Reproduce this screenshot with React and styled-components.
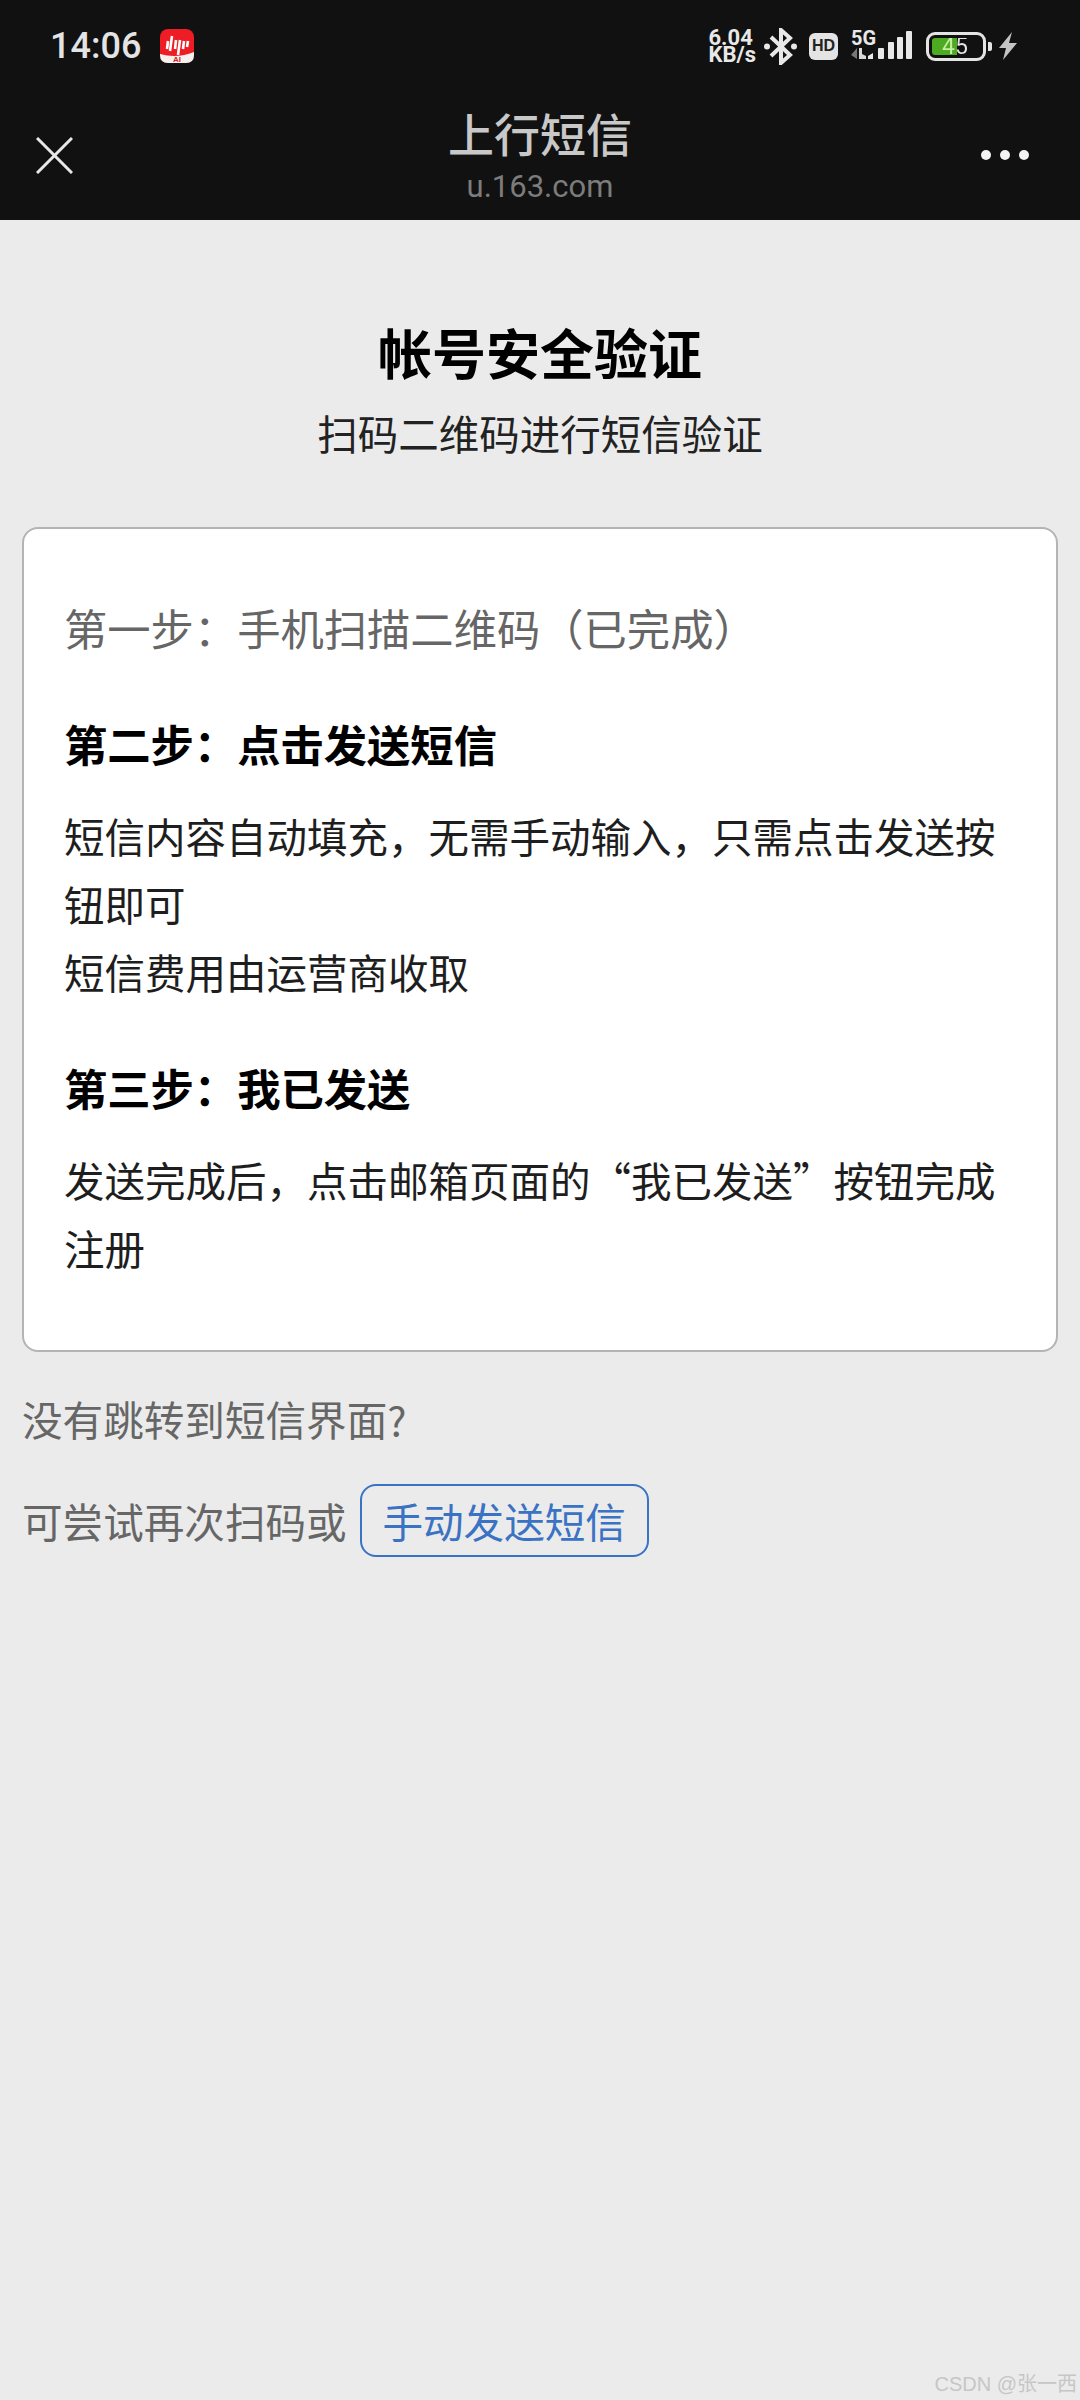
import React from "react";
import styled, { createGlobalStyle } from "styled-components";

const CJK = `"Noto Sans CJK SC", "Noto Sans", sans-serif`;

const GlobalStyle = createGlobalStyle`
  html, body {
    margin: 0;
    padding: 0;
    background: #ebebeb;
  }
  * {
    box-sizing: border-box;
  }
`;

const Page = styled.div`
  width: 1080px;
  height: 2400px;
  position: relative;
  overflow: hidden;
  background: #ebebeb;
  font-family: ${CJK};
`;

const Header = styled.header`
  height: 220px;
  background: #111111;
  color: #e8e8e8;
`;

const StatusBar = styled.div`
  height: 92px;
  padding: 27px 63px 0 50px;
  display: flex;
  align-items: flex-start;
  justify-content: space-between;
`;

const StatusLeft = styled.div`
  display: flex;
  align-items: center;
  gap: 19px;
`;

const Clock = styled.span`
  font-family: Roboto, sans-serif;
  font-weight: 500;
  font-size: 36px;
  line-height: 38px;
  color: #e4e4e4;
`;

const StatusRight = styled.div`
  display: flex;
  align-items: center;
  height: 38px;
`;

const Speed = styled.span`
  font-family: Roboto, sans-serif;
  font-weight: 700;
  font-size: 22px;
  line-height: 17px;
  white-space: nowrap;
  color: #e8e8e8;
  margin-right: 8px;
`;

const HdBadge = styled.span`
  width: 29px;
  height: 27px;
  margin: 0 13px 0 12px;
  border-radius: 6px;
  background: #e4e4e4;
  color: #222;
  font-family: "Liberation Sans", sans-serif;
  font-weight: 700;
  font-size: 16px;
  display: flex;
  align-items: center;
  justify-content: center;
`;

const Battery = styled.span`
  width: 60px;
  height: 29px;
  margin-left: 13px;
  border: 3px solid #e4e4e4;
  border-radius: 9px;
  padding: 3px;
  display: flex;
`;

const BatteryInner = styled.span`
  flex: 1;
  border-radius: 3px;
  background: linear-gradient(90deg, #4dab22 0 25px, transparent 25px);
  padding-left: 10px;
  display: flex;
  align-items: center;
`;

const BatteryLevel = styled.span`
  font-family: Roboto, sans-serif;
  font-size: 23px;
  line-height: 17px;
  color: transparent;
  background: linear-gradient(90deg, #c4f0a4 15px, #e4e4e4 15px);
  -webkit-background-clip: text;
  background-clip: text;
`;

const BatteryNub = styled.span`
  width: 4px;
  height: 9px;
  margin: 0 7px 0 2px;
  border-radius: 0 2px 2px 0;
  background: #e4e4e4;
`;

const NavBar = styled.div`
  height: 128px;
  padding: 0 36px;
  display: grid;
  grid-template-columns: 1fr auto 1fr;
  align-items: start;
`;

const CloseButton = styled.span`
  display: block;
  width: 37px;
  height: 37px;
  margin-top: 45px;
`;

const NavTitles = styled.div`
  text-align: center;
  margin-top: 14px;
`;

const NavTitle = styled.div`
  font-size: 46px;
  line-height: 52px;
  font-weight: 500;
  color: #c8c8c8;
`;

const NavUrl = styled.div`
  font-family: Roboto, sans-serif;
  font-size: 31px;
  line-height: 40px;
  margin-top: 9px;
  color: #7c7c7c;
`;

const MoreButton = styled.span`
  justify-self: end;
  display: flex;
  gap: 9px;
  margin: 58px 15px 0 0;
`;

const Dot = styled.i`
  width: 10px;
  height: 10px;
  border-radius: 50%;
  background: #f4f4f4;
`;

const Content = styled.main`
  padding: 0 22px;
`;

const Intro = styled.div`
  text-align: center;
  padding-top: 97px;
  height: 307px;
`;

const Heading = styled.h1`
  margin: 0;
  font-size: 54px;
  line-height: 70px;
  font-weight: 700;
  color: #000;
`;

const Subheading = styled.p`
  margin: 21px 0 0;
  font-size: 40.5px;
  line-height: 50px;
  color: #222;
`;

const Card = styled.section`
  height: 825px;
  padding: 63px 40px 0;
  background: #fff;
  border: 2px solid #b4b4b4;
  border-radius: 16px;
`;

const Step = styled.div`
  margin: 0 0 ${(p) => p.$gap || 0}px;
  font-size: 43.3px;
  line-height: 70px;
  color: ${(p) => (p.$done ? "#666" : "#000")};
  font-weight: ${(p) => (p.$done ? 400 : 700)};
`;

const Text = styled.p`
  margin: 0 0 ${(p) => p.$gap || 0}px;
  font-size: 40.5px;
  line-height: 67.8px;
  color: #1e1e1e;
`;

const Hint = styled.div`
  display: flex;
  align-items: center;
  font-size: 40.6px;
  line-height: 50px;
  color: #666;
  margin-top: ${(p) => p.$top}px;
`;

const LinkButton = styled.span`
  margin-left: 13px;
  width: 289px;
  height: 73px;
  border: 2px solid #3a72c4;
  border-radius: 16px;
  color: #3a72c4;
  display: flex;
  align-items: center;
  justify-content: center;
`;

const Watermark = styled.span`
  position: absolute;
  right: 3px;
  bottom: 3px;
  font-family: "Liberation Sans", ${CJK};
  font-size: 20px;
  line-height: 26px;
  color: #c6c6c6;
`;

const AppLogo = () => (
  <svg width="34" height="34" viewBox="0 0 34 34">
    <rect width="34" height="34" rx="8" fill="#ee1c25" />
    <path d="M0 25 Q17 30 34 23 V26 Q34 34 26 34 H8 Q0 34 0 26 Z" fill="#f6f0ee" />
    <path
      d="M8 12 L7 20 M12 7 L10 22 M16 11 L15 20 M20 11 L18 26 M24 12 L23 20 M28 12 L27 18"
      stroke="#fff"
      strokeWidth="2.6"
    />
    <text x="17" y="33" textAnchor="middle" fontSize="8" fontWeight="700" fill="#d8202a" fontFamily="Liberation Sans">
      AI
    </text>
  </svg>
);

const BluetoothIcon = () => (
  <svg width="33" height="37" viewBox="0 0 33 37">
    <path d="M7 9 L26 27 L17 35 V2 L26 10 L7 28" fill="none" stroke="#e8e8e8" strokeWidth="4" />
    <circle cx="3" cy="18.5" r="3" fill="#e8e8e8" />
    <circle cx="30" cy="18.5" r="3" fill="#e8e8e8" />
  </svg>
);

const SignalIcon = () => (
  <svg width="62" height="32" viewBox="0 0 62 32">
    <text x="0" y="15" fontSize="20" fontWeight="700" fill="#e8e8e8" fontFamily="Roboto">
      5G
    </text>
    <path d="M6 18 V29 L0 25 Z" fill="#777" />
    <path d="M8 18 H11 V24 L15 26 V29 H8 Z" fill="#d8d8d8" />
    <path d="M17 26 L22 23 V29 H17 Z" fill="#e8e8e8" />
    <rect x="27" y="18" width="6" height="11" rx="1" fill="#e8e8e8" />
    <rect x="37" y="12" width="6" height="17" rx="1" fill="#e8e8e8" />
    <rect x="46" y="7" width="6" height="22" rx="1" fill="#e8e8e8" />
    <rect x="55" y="1" width="6" height="28" rx="1" fill="#e8e8e8" />
  </svg>
);

const BoltIcon = () => (
  <svg width="18" height="28" viewBox="0 0 18 28">
    <path d="M13 0 L0 16 H7 L4 28 L18 11 H10 Z" fill="#c4c4c4" />
  </svg>
);

const CloseIcon = () => (
  <svg width="37" height="37" viewBox="0 0 37 37">
    <path d="M1 1 L36 36 M36 1 L1 36" stroke="#e8e8e8" strokeWidth="3" />
  </svg>
);

export default function App() {
  return (
    <Page>
      <GlobalStyle />
      <Header>
        <StatusBar>
          <StatusLeft>
            <Clock>14:06</Clock>
            <AppLogo />
          </StatusLeft>
          <StatusRight>
            <Speed>
              6.04
              <br />
              KB/s
            </Speed>
            <BluetoothIcon />
            <HdBadge>HD</HdBadge>
            <SignalIcon />
            <Battery>
              <BatteryInner>
                <BatteryLevel>45</BatteryLevel>
              </BatteryInner>
            </Battery>
            <BatteryNub />
            <BoltIcon />
          </StatusRight>
        </StatusBar>
        <NavBar>
          <CloseButton>
            <CloseIcon />
          </CloseButton>
          <NavTitles>
            <NavTitle>上行短信</NavTitle>
            <NavUrl>u.163.com</NavUrl>
          </NavTitles>
          <MoreButton>
            <Dot />
            <Dot />
            <Dot />
          </MoreButton>
        </NavBar>
      </Header>
      <Content>
        <Intro>
          <Heading>帐号安全验证</Heading>
          <Subheading>扫码二维码进行短信验证</Subheading>
        </Intro>
        <Card>
          <Step $done $gap={46}>第一步：手机扫描二维码（已完成）</Step>
          <Step $gap={24}>第二步：点击发送短信</Step>
          <Text $gap={47}>
            短信内容自动填充，无需手动输入，只需点击发送按钮即可
            <br />
            短信费用由运营商收取
          </Text>
          <Step $gap={24}>第三步：我已发送</Step>
          <Text>发送完成后，点击邮箱页面的“我已发送”按钮完成注册</Text>
        </Card>
        <Hint $top={42}>没有跳转到短信界面?</Hint>
        <Hint $top={40}>
          可尝试再次扫码或
          <LinkButton>手动发送短信</LinkButton>
        </Hint>
      </Content>
      <Watermark>CSDN @张一西</Watermark>
    </Page>
  );
}
